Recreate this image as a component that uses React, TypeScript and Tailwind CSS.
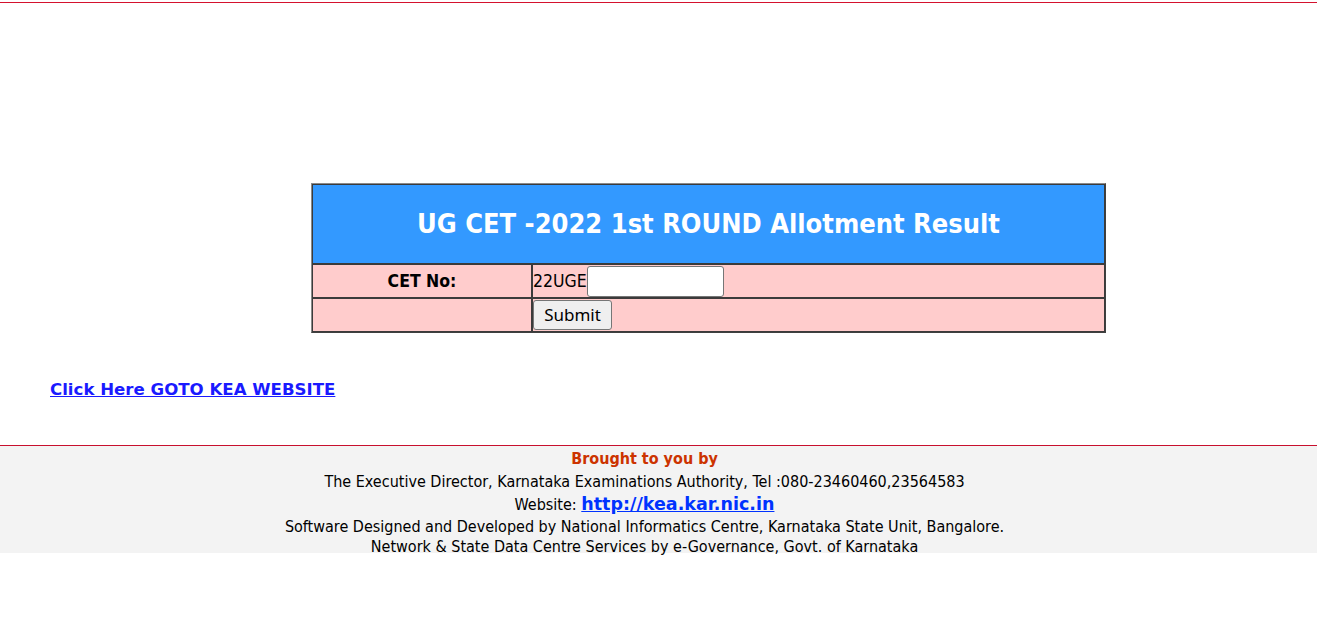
import { useState } from "react";

const tahoma = "font-['DejaVu_Sans_Condensed','DejaVu_Sans',sans-serif]";
const verdana = "font-['DejaVu_Sans',sans-serif]";

export default function App() {
  const [cetNo, setCetNo] = useState("");

  return (
    <div className={`min-h-[634px] bg-white text-black ${tahoma}`}>
      {/* top rule */}
      <div className="pt-[2px]">
        <div className="h-px bg-[#d4122e]" />
      </div>

      {/* allotment form */}
      <div className="pt-[180px] pl-[311px]">
        <table className="w-[795px] border-separate border-spacing-0 border border-t-[#8a8a8a] border-l-[#8a8a8a] border-r-[#404040] border-b-[#404040]">
          <tbody>
            <tr>
              <td
                colSpan={2}
                className="h-[80px] border border-[#3b3b3b] bg-[#3399ff] text-center text-[27px] font-bold text-white"
              >
                UG CET -2022 1st ROUND Allotment Result
              </td>
            </tr>
            <tr className="bg-[#ffcccc]">
              <td className="h-[34px] w-[220px] border border-[#3b3b3b] text-center text-[17.5px] font-bold">
                CET No:
              </td>
              <td className="border border-[#3b3b3b] p-0 text-[17.5px]">
                <div className="flex items-center">
                  <span>22UGE</span>
                  <input
                    value={cetNo}
                    onChange={(e) => setCetNo(e.target.value)}
                    className="h-[31px] w-[137px] rounded-[3px] border border-[#767676] bg-white px-1 outline-none"
                  />
                </div>
              </td>
            </tr>
            <tr className="bg-[#ffcccc]">
              <td className="h-[34px] border border-[#3b3b3b]" />
              <td className="border border-[#3b3b3b] p-0">
                <button className="h-[30px] w-[79px] rounded-[3px] border border-[#767676] bg-[#efefef] text-[17px] font-['Noto_Sans',sans-serif]">
                  Submit
                </button>
              </td>
            </tr>
          </tbody>
        </table>
      </div>

      {/* kea link */}
      <div className="pl-[50px] pt-[45px]">
        <a href="#" className={`text-[16.6px] font-bold text-[#1a1aff] underline ${verdana}`}>
          Click Here GOTO KEA WEBSITE
        </a>
      </div>

      {/* footer */}
      <div className="mt-[42px] h-[108px] border-t border-[#c8102e] bg-[#f3f3f3] pr-[28px] pt-[2px] text-center text-[16px] leading-[22px]">
        <div className="font-bold text-[#cc3300]">Brought to you by</div>
        <div className="leading-[23px]">
          The Executive Director, Karnataka Examinations Authority, Tel :080-23460460,23564583
        </div>
        <div>
          Website:{" "}
          <a href="#" className={`text-[17.5px] font-bold text-[#0033ff] underline ${verdana}`}>
            http://kea.kar.nic.in
          </a>
        </div>
        <div className="leading-[21px]">
          Software Designed and Developed by National Informatics Centre, Karnataka State Unit, Bangalore.
        </div>
        <div className="leading-[19px]">Network &amp; State Data Centre Services by e-Governance, Govt. of Karnataka</div>
      </div>
    </div>
  );
}
